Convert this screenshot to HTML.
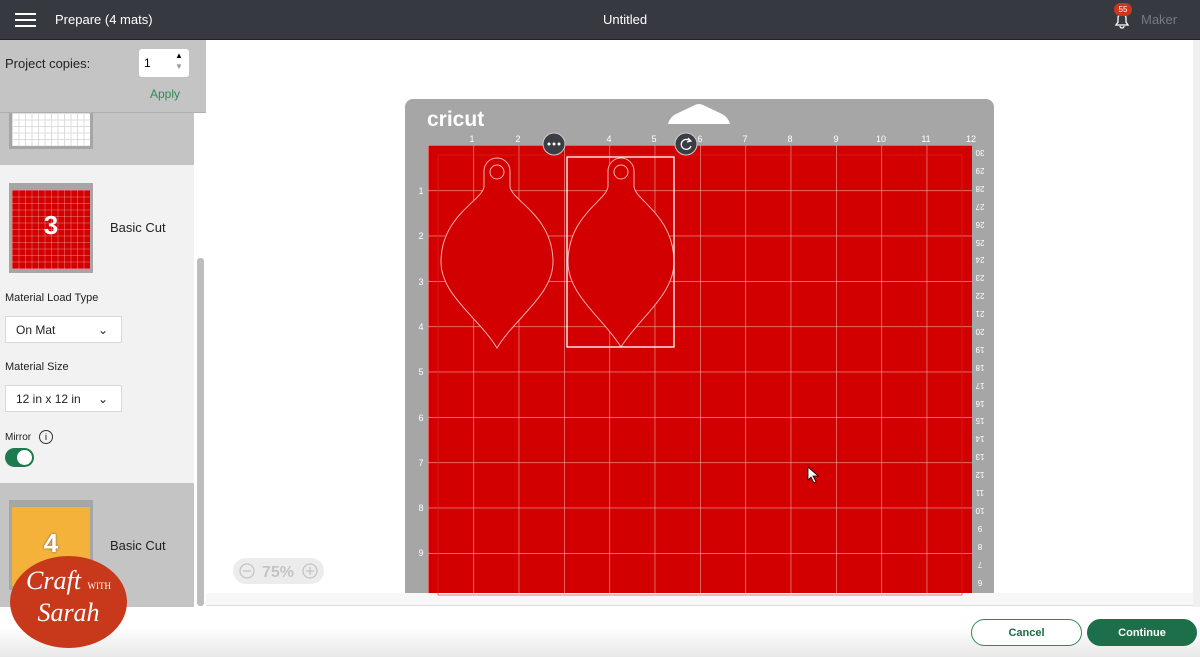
<!DOCTYPE html>
<html><head><meta charset="utf-8"><style>
*{margin:0;padding:0;box-sizing:border-box}
body{width:1200px;height:657px;overflow:hidden;background:#fff;font-family:"Liberation Sans",sans-serif;position:relative}
.abs{position:absolute}
.hdr{left:0;top:0;width:1200px;height:40px;background:#363a40;border-bottom:1px solid #222}
.sb{left:0;top:40px;width:194px;height:567px;background:#f2f2f2}
.sel{border:1px solid #d8d8d8;background:#fff;font-size:12px;color:#222;padding-left:10px;line-height:26px}
</style></head><body>
<div class="abs hdr">
  <div class="abs" style="left:15px;top:13px;width:21px;height:2px;background:#fff;box-shadow:0 6px 0 #fff,0 12px 0 #fff"></div>
  <div class="abs" style="left:55px;top:12px;color:#fff;font-size:13px">Prepare (4 mats)</div>
  <div class="abs" style="left:603px;top:12px;color:#fff;font-size:13px">Untitled</div>
  <svg class="abs" style="left:1112px;top:10px" width="20" height="20" viewBox="0 0 20 20"><path d="M4 15h12l-2-3V8a4 4 0 0 0-8 0v4z M8 16a2 2 0 0 0 4 0" fill="none" stroke="#fff" stroke-width="1.3"/></svg>
  <div class="abs" style="left:1114px;top:3px;width:18px;height:13px;border-radius:7px;background:#c8391c;color:#fff;font-size:8px;text-align:center;line-height:13px">55</div>
  <div class="abs" style="left:1141px;top:12px;color:#777b80;font-size:13px">Maker</div>
</div>
<div class="abs sb">
  <div class="abs" style="left:0;top:0;width:207px;height:73px;background:#c4c4c4;border-bottom:1px solid #b0b0b0"></div>
  <div class="abs" style="left:5px;top:16px;font-size:13px;color:#222">Project copies:</div>
  <div class="abs" style="left:139px;top:9px;width:50px;height:28px;background:#fff;border-radius:3px;font-size:12px;padding:7px 5px">1<span class="abs" style="left:36px;top:2px;font-size:8px">▲</span><span class="abs" style="left:36px;top:13px;font-size:8px;color:#999">▼</span></div>
  <div class="abs" style="left:150px;top:47px;font-size:12px;color:#2e8b57">Apply</div>
  <div class="abs" style="left:0;top:73px;width:194px;height:52px;background:#c4c4c4"></div>
  <div class="abs" style="left:9px;top:73px;width:84px;height:36px;background:#a6a6a6"><div class="abs" style="left:3px;top:0;width:78px;height:33px;background:#fff;background-image:linear-gradient(#ddd 1px,transparent 1px),linear-gradient(90deg,#ddd 1px,transparent 1px);background-size:6.5px 6.5px"></div></div>
  <div class="abs" style="left:9px;top:143px;width:84px;height:90px;background:#a6a6a6"><div class="abs" style="left:3px;top:7px;width:78px;height:79px;background:#d20000;background-image:linear-gradient(rgba(255,255,255,.25) 1px,transparent 1px),linear-gradient(90deg,rgba(255,255,255,.25) 1px,transparent 1px);background-size:6.5px 6.5px"></div><div class="abs" style="left:0;top:27px;width:84px;text-align:center;color:#fff;font-weight:bold;font-size:26px">3</div></div>
  <div class="abs" style="left:110px;top:180px;font-size:13px;color:#222">Basic Cut</div>
  <div class="abs" style="left:5px;top:252px;font-size:11px;color:#222">Material Load Type</div>
  <div class="abs sel" style="left:5px;top:276px;width:117px;height:27px">On Mat<span class="abs" style="left:92px;top:0">⌄</span></div>
  <div class="abs" style="left:5px;top:321px;font-size:11px;color:#222">Material Size</div>
  <div class="abs sel" style="left:5px;top:345px;width:117px;height:27px">12 in x 12 in<span class="abs" style="left:92px;top:0">⌄</span></div>
  <div class="abs" style="left:5px;top:392px;font-size:10px;color:#222">Mirror</div>
  <div class="abs" style="left:39px;top:390px;width:14px;height:14px;border:1.3px solid #333;border-radius:50%;font-size:9px;text-align:center;line-height:12px">i</div>
  <div class="abs" style="left:5px;top:408px;width:29px;height:19px;border-radius:10px;background:#1d7a4e"><div class="abs" style="left:12px;top:2px;width:15px;height:15px;border-radius:50%;background:#fff"></div></div>
  <div class="abs" style="left:0;top:443px;width:194px;height:124px;background:#c4c4c4"></div>
  <div class="abs" style="left:9px;top:460px;width:84px;height:90px;background:#a6a6a6"><div class="abs" style="left:3px;top:7px;width:78px;height:79px;background:#f4b23a"></div><div class="abs" style="left:0;top:28px;width:84px;text-align:center;color:#fff;font-weight:bold;font-size:26px;text-shadow:0 0 2px #555">4</div></div>
  <div class="abs" style="left:110px;top:498px;font-size:13px;color:#222">Basic Cut</div>
</div>
<div class="abs" style="left:197px;top:258px;width:7px;height:348px;background:#bdbdbd;border-radius:3px"></div>
<div class="abs" style="left:206px;top:40px;width:988px;height:566px;background:#fff;border-bottom:2px solid #ddd"></div>
<div class="abs" style="left:206px;top:593px;width:988px;height:12px;background:#f7f7f7"></div>
<div class="abs" style="left:1193px;top:40px;width:7px;height:567px;background:#f0f0f0"></div>
<div class="abs" style="left:0;top:607px;width:1200px;height:50px;background:linear-gradient(#fff 40%,#e8e8e8)"></div>

<svg class="abs" style="left:0;top:0" width="1200" height="600" viewBox="0 0 1200 600">
  <defs>
    <pattern id="g" x="428" y="145" width="45.333" height="45.333" patternUnits="userSpaceOnUse">
      <path d="M0 0V45.333M0 0H45.333" stroke="#f3a3a3" stroke-width="1.2" fill="none"/>
    </pattern>
  </defs>
  <path d="M405 593V107a8 8 0 0 1 8-8H986a8 8 0 0 1 8 8V593z" fill="#a6a6a6"/>
  <path d="M668 124 Q670 117 676 114 L695 105 Q699 103 703 105 L722 114 Q728 117 730 124Z" fill="#fff"/>
  <text x="427" y="126" fill="#fff" font-size="21" font-weight="bold" font-family="Liberation Sans">cricut</text>
  <rect x="428" y="145" width="544" height="448" fill="#d20000"/>
  <rect x="428" y="145" width="544" height="448" fill="url(#g)"/>
  <rect x="438" y="155" width="524" height="440" fill="none" stroke="#dc2a2a" stroke-width="0.6"/>
  <g fill="#fff" font-size="9" font-family="Liberation Sans" text-anchor="middle">
    <text x="472" y="142">1</text><text x="518" y="142">2</text><text x="609" y="142">4</text><text x="654" y="142">5</text><text x="700" y="142">6</text><text x="745" y="142">7</text><text x="790" y="142">8</text><text x="836" y="142">9</text><text x="881" y="142">10</text><text x="926" y="142">11</text><text x="971" y="142">12</text>
    <text x="421" y="194">1</text><text x="421" y="239">2</text><text x="421" y="285">3</text><text x="421" y="330">4</text><text x="421" y="375">5</text><text x="421" y="421">6</text><text x="421" y="466">7</text><text x="421" y="511">8</text><text x="421" y="556">9</text>
  </g>
  <g fill="#fff" font-size="8" font-family="Liberation Sans" text-anchor="middle">
    <text transform="translate(980,150) rotate(180)">30</text><text transform="translate(980,168) rotate(180)">29</text><text transform="translate(980,186) rotate(180)">28</text><text transform="translate(980,204) rotate(180)">27</text><text transform="translate(980,222) rotate(180)">26</text><text transform="translate(980,240) rotate(180)">25</text><text transform="translate(980,257) rotate(180)">24</text><text transform="translate(980,275) rotate(180)">23</text><text transform="translate(980,293) rotate(180)">22</text><text transform="translate(980,311) rotate(180)">21</text><text transform="translate(980,329) rotate(180)">20</text><text transform="translate(980,347) rotate(180)">19</text><text transform="translate(980,365) rotate(180)">18</text><text transform="translate(980,383) rotate(180)">17</text><text transform="translate(980,401) rotate(180)">16</text><text transform="translate(980,418) rotate(180)">15</text><text transform="translate(980,436) rotate(180)">14</text><text transform="translate(980,454) rotate(180)">13</text><text transform="translate(980,472) rotate(180)">12</text><text transform="translate(980,490) rotate(180)">11</text><text transform="translate(980,508) rotate(180)">10</text><text transform="translate(980,526) rotate(180)">9</text><text transform="translate(980,544) rotate(180)">8</text><text transform="translate(980,562) rotate(180)">7</text><text transform="translate(980,580) rotate(180)">6</text>
  </g>
  <g fill="#d20000" stroke="#f4b0b0" stroke-width="1">
    <g transform="translate(497,0)">
      <path d="M-13 171A13 13 0 0 1 13 171V186C13 200 56 215 56 262C56 295 18 318 0 348C-18 318 -56 295 -56 262C-56 215 -13 200 -13 186Z"/>
      <circle cx="0" cy="172" r="7"/>
    </g>
    <g transform="translate(621,0)">
      <path d="M-13 171A13 13 0 0 1 13 171V186C13 200 53 215 53 262C53 295 18 318 0 347C-18 318 -53 295 -53 262C-53 215 -13 200 -13 186Z"/>
      <circle cx="0" cy="172" r="7"/>
    </g>
  </g>
  <rect x="567" y="157" width="107" height="190" fill="none" stroke="#fff" stroke-width="1.3"/>
  <circle cx="554" cy="144" r="11" fill="#3a3e44" stroke="#ccc"/>
  <g fill="#fff"><circle cx="549" cy="144" r="1.5"/><circle cx="554" cy="144" r="1.5"/><circle cx="559" cy="144" r="1.5"/></g>
  <circle cx="686" cy="144" r="11" fill="#3a3e44" stroke="#ccc"/>
  <path d="M690 141A5 5 0 1 0 691 146" fill="none" stroke="#fff" stroke-width="1.3"/><path d="M688 138L691 141L687 142" fill="none" stroke="#fff" stroke-width="1.2"/>
  <path d="M808 467V480L811 477L814 483L816 482L813 476H818Z" fill="#fff" stroke="#000" stroke-width="0.8"/>
  <rect x="233" y="558" width="91" height="26" rx="13" fill="#ececec"/>
  <circle cx="247" cy="571" r="7" fill="none" stroke="#c4c4c4" stroke-width="1.3"/><path d="M243 571h8" stroke="#c4c4c4" stroke-width="1.3"/>
  <text x="278" y="577" fill="#c4c4c4" font-size="16" font-weight="bold" text-anchor="middle" font-family="Liberation Sans">75%</text>
  <circle cx="310" cy="571" r="7" fill="none" stroke="#c4c4c4" stroke-width="1.3"/><path d="M306 571h8M310 567v8" stroke="#c4c4c4" stroke-width="1.3"/>
</svg>

<div class="abs" style="left:971px;top:619px;width:111px;height:27px;border:1px solid #2e8b57;border-radius:14px;color:#1d6b45;font-size:11px;font-weight:bold;text-align:center;line-height:25px;background:#fff;padding-top:1px">Cancel</div>
<div class="abs" style="left:1087px;top:619px;width:110px;height:27px;border-radius:14px;background:#1d6f4a;color:#fff;font-size:11px;font-weight:bold;text-align:center;line-height:28px">Continue</div>

<div class="abs" style="left:10px;top:556px;width:117px;height:92px;border-radius:50%;background:#c8391c;color:#fff;font-family:'Liberation Serif',serif;font-style:italic;text-align:center">
  <div style="font-size:26px;margin-top:12px;line-height:26px">Craft <span style="font-size:9px;font-style:normal">WITH</span></div>
  <div style="font-size:26px;line-height:28px">Sarah</div>
</div>
</body></html>
